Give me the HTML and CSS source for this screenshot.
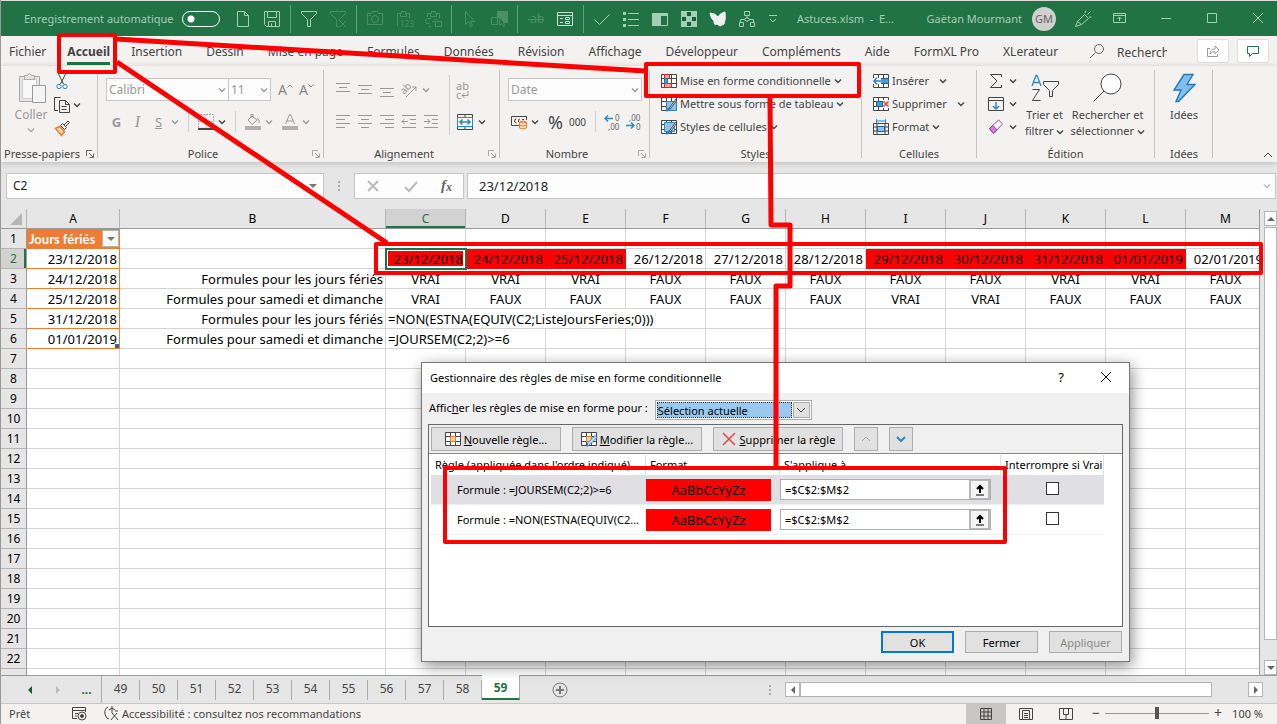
FILE: index.html
```html
<!DOCTYPE html>
<html lang="fr">
<head>
    <meta charset="UTF-8">
    <meta name="viewport" content="width=device-width, initial-scale=1.0">
    <title>Astuces.xlsm - Excel</title>
    <link rel="stylesheet" href="styles.css">
</head>
<body>
    <!-- Symboles réutilisés -->
    <svg class="symbols" aria-hidden="true">
        <symbol id="chev" viewBox="0 0 8 6"><path d="M1 1.5l3 3 3-3" fill="none" stroke="currentColor" stroke-width="1.4"/></symbol>
        <symbol id="launcher" viewBox="0 0 8 8"><path d="M.5 6V.5H6M3 3l4 4M7.5 3.5v4h-4" fill="none" stroke="currentColor"/></symbol>
        <symbol id="grid" viewBox="0 0 16 16"><path d="M.5 1.5h15v13H.5zM.5 5.500h15M.5 10.500h15M5.500 1.500v13M10.500 1.500v13" fill="#fff" stroke="#444"/></symbol>
        <symbol id="pick" viewBox="0 0 12 12"><path d="M2 11h8" stroke="#000"/><path d="M6 9V2M3 5l3-3 3 3" fill="none" stroke="#000" stroke-width="2"/></symbol>
    </svg>

    <!-- Barre de titre -->
    <header class="titlebar">
        <label class="autosave">Enregistrement automatique <input type="checkbox" class="toggle"></label>
        <div class="quick">
            <button aria-label="Nouveau"><svg viewBox="0 0 20 20"><path d="M4.500 2.500h7l4 4v11h-11zM11.500 2.500v4h4"/></svg></button>
            <button aria-label="Enregistrer"><svg viewBox="0 0 20 20"><path d="M2.500 2.500h15v15h-13l-2-2zM5.500 2.500v6h9v-6M6.500 17.500v-5h7v5M9.500 14.500v3"/></svg></button>
            <span class="sep"></span>
            <button aria-label="Filtrer"><svg viewBox="0 0 20 20"><path d="M2.500 2.500h15v2l-6 6v7h-3v-7l-6-6z"/></svg></button>
            <button class="off" aria-label="Effacer le filtre"><svg viewBox="0 0 20 20"><path d="M2.500 2.500h15v2l-6 6v2M2.500 4.500l6 6v7h2M2.500 2.500v2M12 12l6 6M18 12l-6 6"/></svg></button>
            <span class="sep"></span>
            <button class="off" aria-label="Appareil photo"><svg viewBox="0 0 20 20"><path d="M2.500 4.500h4l1-2h5l1 2h4v11h-15zM4 6.500h2"/><circle cx="10" cy="10" r="3.500"/></svg></button>
            <button class="off" aria-label="Coller les valeurs"><svg viewBox="0 0 20 20"><path d="M3.500 17v-12.500h4v-2h4v2h4v5M6.500 4.500v3h6v-3"/><text x="6" y="18">123</text></svg></button>
            <button class="off" aria-label="Coller le lien"><svg viewBox="0 0 20 20"><path d="M4.500 8v-3.500h4v-2h4v2h4v5M7.500 4.500v3h6v-3M8 9.500h-4.500q-2 3 0 5h3M9 12.500h3M11 10.500h3M12.500 12.500h6v5h-6zM8 17.500h-2"/></svg></button>
            <span class="sep"></span>
            <button class="off" aria-label="Sélectionner"><svg viewBox="0 0 20 20"><path d="M5.500 2.500v13l3-3 2 5 2-1-2-4h4z"/></svg></button>
            <button class="off" aria-label="Sélectionner des objets"><svg viewBox="0 0 20 20"><path d="M8 2h11v12h-4l-5-6-2 2z" fill="currentColor" stroke="none"/><path d="M2.500 8.500h6v7h-6zM10.500 7.500v9l2-2 2 3 1-1-1-3h3z"/></svg></button>
            <span class="sep"></span>
            <button class="off" aria-label="Barré"><svg viewBox="0 0 20 20"><text class="big" x="4" y="14">ab</text><path d="M2 10.500h16"/></svg></button>
            <button class="bright" aria-label="Formulaire"><svg viewBox="0 0 20 20"><path d="M2.500 3.500h15v13h-15zM2.500 6.500h15M5 9.500h3M5 13.500h3M10.500 8.500h4v2h-4zM10.500 12.500h4v2h-4z"/></svg></button>
            <span class="sep"></span>
            <button aria-label="Valider"><svg viewBox="0 0 20 20"><path d="M2.500 10.500l5 5 10-10"/></svg></button>
            <button aria-label="Liste"><svg viewBox="0 0 20 20"><path d="M7 4.500h11M7 10.500h11M7 16.500h11"/><path d="M2 3h3v3H2zM2 9h3v3H2zM2 15h3v3H2z" fill="currentColor" stroke="none"/></svg></button>
            <button aria-label="Volet"><svg viewBox="0 0 20 20"><path d="M2.500 4.500h15v12h-15z"/><path d="M2 4h9v13H2zM2 4h16v3H2z" fill="currentColor" stroke="none"/></svg></button>
            <button aria-label="Damier"><svg viewBox="0 0 20 20"><path d="M2 2h16v16H2z" fill="#a3cfb5" stroke="none"/><path d="M8 3h4v4H8zM3 8h4v4H3zM13 8h4v4h-4zM8 13h4v4H8z" fill="#17603a" stroke="none"/></svg></button>
            <button class="white" aria-label="Papillon"><svg viewBox="0 0 20 20"><path d="M2 4q5 0 8 4 2-4 7-5 1 7-1 12l-4 2-3-2q-3 2-3-3-3-2-4-8z" fill="currentColor"/></svg></button>
            <button aria-label="Organigramme"><svg viewBox="0 0 20 20"><path d="M7.500 2.500h5v4h-5zM10 6.500v3M10 8.500l3 2-3 2-3-2zM7 10.500h-3.500v3M13 10.500h3.500v3M2.500 13.500h4v4h-4zM13.500 13.500h4v4h-4z"/></svg></button>
            <button aria-label="Personnaliser" class="narrow"><svg viewBox="0 0 20 20"><path d="M6 6.500h8M7 10l3 3 3-3"/></svg></button>
        </div>
        <span class="doc-name">Astuces.xlsm &nbsp;-&nbsp; E...</span>
        <span class="user">Gaëtan Mourmant</span>
        <span class="avatar">GM</span>
        <div class="window-tools">
            <button aria-label="Nouveautés"><svg viewBox="0 0 20 20"><path d="M2.500 17.500l2-5 7-7 4 4-7 6zM4.500 12.500l4 3M12 4l1-2.500M14.500 5.500l3-3M16 8h2.500"/></svg></button>
            <button aria-label="Options du ruban"><svg viewBox="0 0 20 20"><path d="M4.500 4.500h12v9h-12zM4.500 6.500h12M10.500 12V8M8.500 10l2-2 2 2"/></svg></button>
        </div>
        <div class="window-buttons">
            <button aria-label="Réduire"><svg viewBox="0 0 20 20"><path d="M5 9.500h10"/></svg></button>
            <button aria-label="Agrandir"><svg viewBox="0 0 20 20"><path d="M5.500 4.500h9v9h-9z"/></svg></button>
            <button aria-label="Fermer Excel"><svg viewBox="0 0 20 20"><path d="M5 4l10 10M15 4L5 14"/></svg></button>
        </div>
    </header>

    <!-- Onglets du ruban -->
    <nav class="tabs">
        <a href="#">Fichier</a>
        <a href="#" class="active">Accueil</a>
        <a href="#">Insertion</a>
        <a href="#">Dessin</a>
        <a href="#">Mise en page</a>
        <a href="#">Formules</a>
        <a href="#">Données</a>
        <a href="#">Révision</a>
        <a href="#">Affichage</a>
        <a href="#">Développeur</a>
        <a href="#">Compléments</a>
        <a href="#">Aide</a>
        <a href="#">FormXL Pro</a>
        <a href="#">XLerateur</a>
        <div class="search">
            <svg class="i16" viewBox="0 0 16 16"><circle cx="10" cy="6" r="4.500"/><path d="M6.500 9.500L1 15"/></svg>
            <input type="text" aria-label="Rechercher" value="Rechercher">
        </div>
        <button class="tab-button" aria-label="Partager"><svg class="i16 pale" viewBox="0 0 16 16"><path d="M5 5.500H2.500v8h10V11M5 11q0-5 5-5V3l4 4-4 4V8.500q-3 0-5 2.500z"/></svg></button>
        <button class="tab-button" aria-label="Commentaires"><svg class="i16 green" viewBox="0 0 16 16"><path d="M2.500 3.500h11v7h-6l-3 3v-3h-2z"/></svg></button>
    </nav>

    <!-- Ruban -->
    <div class="ribbon">
        <section class="group clipboard">
            <div class="group-body">
                <button class="big-button pale-text">
                    <svg class="i32" viewBox="0 0 32 32"><path d="M4.500 4.500h20v25h-20z" fill="#e4e4e4" stroke="#aaa"/><path d="M7.500 7.500h14v19h-14z" fill="#f8f8f8" stroke="#ccc"/><path d="M9.500 7.500v-4h3q2-4 4 0h3v4z" fill="#e4e4e4" stroke="#aaa"/><path d="M17.500 13.500h13v17h-13z" fill="#f4f4f4" stroke="#999"/></svg>
                    Coller
                    <svg class="chev"><use href="#chev"/></svg>
                </button>
                <div class="stack">
                    <button class="row-button" aria-label="Couper"><svg class="i16" viewBox="0 0 16 16"><path d="M4.500 0l5 10M11.500 0l-5 10"/><circle cx="5" cy="12.500" r="2.200" stroke="#2b88c8"/><circle cx="11" cy="12.500" r="2.200" stroke="#2b88c8"/></svg></button>
                    <button class="row-button" aria-label="Copier"><svg class="i16" viewBox="0 0 16 16"><path d="M4 13.500H.5v-13h6M5.500 3.500h6l4 4v8h-10zM11.500 3.500v4h4M7.500 9.500h5M7.500 12.500h5"/></svg><svg class="chev"><use href="#chev"/></svg></button>
                    <button class="row-button" aria-label="Reproduire la mise en forme"><svg class="i16" viewBox="0 0 16 16"><path d="M1.500 8.500l4-2 5 5-3 4z" fill="#fbd9a8" stroke="#ed7d31" stroke-width="1.500"/><path d="M6.500 5.500l4 4 2-2-4-4zM10 5l4-4 1.500 1.500-4 4"/></svg></button>
                </div>
            </div>
            <div class="group-title">Presse-papiers<svg class="launcher"><use href="#launcher"/></svg></div>
        </section>

        <section class="group font">
            <div class="group-body column">
                <div class="line">
                    <span class="combo name"><select aria-label="Police"><option>Calibri</option></select><svg class="chev pale"><use href="#chev"/></svg></span>
                    <span class="combo size"><select aria-label="Taille"><option>11</option></select><svg class="chev pale"><use href="#chev"/></svg></span>
                    <button class="tool glyph grow">A<svg class="mini" viewBox="0 0 6 4"><path d="M.5 3.500L3 1l2.500 2.500"/></svg></button>
                    <button class="tool glyph">A<svg class="mini" viewBox="0 0 6 4"><path d="M.5.5L3 3 5.500.5"/></svg></button>
                </div>
                <div class="line">
                    <button class="tool pale-text"><b>G</b></button>
                    <button class="tool pale-text serif"><i>I</i></button>
                    <button class="tool pale-text"><u>S</u></button>
                    <svg class="chev pale"><use href="#chev"/></svg>
                    <span class="vsep"></span>
                    <button class="tool" aria-label="Bordures"><svg class="i16" viewBox="0 0 16 16"><path d="M.5 14V.5h15V14M8 .5V14M.5 7.500h15" stroke="#aaa" stroke-dasharray="2 1"/><path d="M0 15h16" stroke-width="2"/></svg></button>
                    <svg class="chev"><use href="#chev"/></svg>
                    <span class="vsep"></span>
                    <button class="tool" aria-label="Remplissage"><svg class="i16 pale" viewBox="0 0 16 16"><path d="M3 6l4-4 5 4-5 4.500zM6 4V.5h2V4M12 4q3 2 2 5"/><path d="M0 12h16v4H0z" fill="#b5aeae" stroke="none"/></svg></button>
                    <svg class="chev pale"><use href="#chev"/></svg>
                    <button class="tool font-color" aria-label="Couleur de police"><svg class="i16 pale" viewBox="0 0 16 16"><path d="M3.500 10l4-9.500h1l4 9.500M5 7h6"/><path d="M0 12h16v4H0z" fill="#b5aeae" stroke="none"/></svg></button>
                    <svg class="chev pale"><use href="#chev"/></svg>
                </div>
            </div>
            <div class="group-title">Police<svg class="launcher pale"><use href="#launcher"/></svg></div>
        </section>

        <section class="group align">
            <div class="group-body">
                <div class="stack lines">
                    <div class="line">
                        <button class="tool" aria-label="Aligner en haut"><svg class="i16 pale" viewBox="0 0 16 16"><path d="M1 1.500h14M4 5.500h8M1 9.500h14"/></svg></button>
                        <button class="tool" aria-label="Aligner au centre"><svg class="i16 pale" viewBox="0 0 16 16"><path d="M1 3.500h14M4 7.500h8M1 11.500h14"/></svg></button>
                        <button class="tool" aria-label="Aligner en bas"><svg class="i16 pale" viewBox="0 0 16 16"><path d="M1 6.500h14M4 10.500h8M1 14.500h14"/></svg></button>
                        <button class="tool" aria-label="Orientation"><svg class="i16 pale" viewBox="0 0 16 16"><text class="mid" x="0" y="10" transform="rotate(-45 5 8)">ab</text><path d="M5 15L15 5M11 5h4v4"/></svg></button>
                        <svg class="chev pale"><use href="#chev"/></svg>
                    </div>
                    <div class="line">
                        <button class="tool" aria-label="Gauche"><svg class="i16 pale" viewBox="0 0 16 16"><path d="M1 1.500h14M1 5.500h9M1 9.500h14M1 13.500h9"/></svg></button>
                        <button class="tool" aria-label="Centrer"><svg class="i16 pale" viewBox="0 0 16 16"><path d="M1 1.500h14M4 5.500h8M1 9.500h14M4 13.500h8"/></svg></button>
                        <button class="tool" aria-label="Droite"><svg class="i16 pale" viewBox="0 0 16 16"><path d="M1 1.500h14M6 5.500h9M1 9.500h14M6 13.500h9"/></svg></button>
                        <button class="tool" aria-label="Diminuer le retrait"><svg class="i16 pale" viewBox="0 0 16 16"><path d="M1 1.500h14M9 5.500h6M9 9.500h6M1 13.500h14M7 7.500H1M3.500 5L1 7.500 3.500 10"/></svg></button>
                        <button class="tool" aria-label="Augmenter le retrait"><svg class="i16 pale" viewBox="0 0 16 16"><path d="M1 1.500h14M9 5.500h6M9 9.500h6M1 13.500h14M1 7.500h6M4.500 5L7 7.500 4.500 10"/></svg></button>
                    </div>
                </div>
                <span class="vsep tall"></span>
                <div class="stack lines">
                    <div class="line">
                        <button class="tool wrap" aria-label="Renvoyer à la ligne"><span>ab</span><span>c<svg viewBox="0 0 8 8"><path d="M7 0v4.500H1M3.500 2L1 4.500 3.500 7"/></svg></span></button>
                    </div>
                    <div class="line">
                        <button class="tool" aria-label="Fusionner"><svg class="i16" viewBox="0 0 16 16"><path d="M.5.5h15v15H.5zM8 .5v3M8 12.500v3"/><path d="M.5 3.500h15v9H.5z" fill="#fff" stroke="#2b88c8"/><path d="M3 8h10M5.500 5.500L3 8l2.500 2.500M10.500 5.500L13 8l-2.500 2.500" stroke="#2b88c8" stroke-width="1.500"/></svg></button>
                        <svg class="chev"><use href="#chev"/></svg>
                    </div>
                </div>
            </div>
            <div class="group-title">Alignement<svg class="launcher pale"><use href="#launcher"/></svg></div>
        </section>

        <section class="group number">
            <div class="group-body column">
                <div class="line"><span class="combo format"><select aria-label="Format de nombre"><option>Date</option></select><svg class="chev pale"><use href="#chev"/></svg></span></div>
                <div class="line">
                    <button class="tool" aria-label="Format comptabilité"><svg class="i16" viewBox="0 0 16 16"><path d="M8 11.500H.5v-9h15V6M5.500 5q-2 0-2 2t2 2M9 5q-2 0-1.500 3M11 5.500h2"/><path d="M8.500 8q3.500-2 7 0v6q-3.500 2-7 0zM8.500 8q3.500 2 7 0M8.500 11q3.500 2 7 0" fill="#fde3c8" stroke="#ed7d31"/></svg></button>
                    <svg class="chev"><use href="#chev"/></svg>
                    <button class="tool percent">%</button>
                    <button class="tool zeros">000</button>
                    <span class="vsep"></span>
                    <button class="tool" aria-label="Ajouter une décimale"><svg class="i18" viewBox="0 0 18 18"><path d="M9 5.500H1M4 2.500l-3 3 3 3" stroke="#2b88c8" stroke-width="1.500"/><text x="11" y="8">0</text><text x="4" y="17">,00</text></svg></button>
                    <button class="tool" aria-label="Réduire les décimales"><svg class="i18" viewBox="0 0 18 18"><path d="M1 12.500h8M6 9.500l3 3-3 3" stroke="#2b88c8" stroke-width="1.500"/><text x="4" y="8">,00</text><text x="11" y="17">0</text></svg></button>
                </div>
            </div>
            <div class="group-title">Nombre<svg class="launcher pale"><use href="#launcher"/></svg></div>
        </section>

        <section class="group styles">
            <div class="group-body column tight">
                <button class="row-button"><svg class="i16" viewBox="0 0 16 16"><use href="#grid"/><path d="M3.500 1.500h5v4h-5zM3.500 10.500h7v4h-7z" fill="#f8a0a0" stroke="#d22"/><path d="M3.500 5.500h3v5h-3z" fill="#4a9ad8" stroke="#2b6fb0"/></svg>Mise en forme conditionnelle<svg class="chev"><use href="#chev"/></svg></button>
                <button class="row-button"><svg class="i16" viewBox="0 0 16 16"><use href="#grid"/><path d="M5.500 5.500h10v9h-10z" fill="#8cc4f0" stroke="#2b88c8"/><path d="M6 15l3-4 6-8 1 1-6 8z" fill="#fff" stroke="#444"/><path d="M5 15.500q1-4 3-4l2 2q-2 2-5 2z" fill="#2b88c8" stroke="none"/></svg>Mettre sous forme de tableau<svg class="chev"><use href="#chev"/></svg></button>
                <button class="row-button"><svg class="i16" viewBox="0 0 16 16"><use href="#grid"/><path d="M3.500 3.500h10v9h-10z" fill="#8cc4f0" stroke="#2b88c8"/><path d="M6 15l3-4 6-8 1 1-6 8z" fill="#fff" stroke="#444"/><path d="M5 15.500q1-4 3-4l2 2q-2 2-5 2z" fill="#2b88c8" stroke="none"/></svg>Styles de cellules<svg class="chev"><use href="#chev"/></svg></button>
            </div>
            <div class="group-title">Styles</div>
        </section>

        <section class="group cells">
            <div class="group-body column tight">
                <button class="row-button"><svg class="i16" viewBox="0 0 16 16"><use href="#grid"/><path d="M7.500 5.500h8v5h-8z" fill="#4a9ad8" stroke="#1f5f9f"/><path d="M0 5h8v6H0z" fill="#f3f2f1" stroke="none"/><path d="M8 8H1M4 4.500L1 8l3 3.500" stroke="#2b88c8" stroke-width="1.500"/></svg>Insérer<svg class="chev far"><use href="#chev"/></svg></button>
                <button class="row-button"><svg class="i16" viewBox="0 0 16 16"><use href="#grid"/><path d="M3.500 5.500h6v5h-6z" fill="#4a9ad8" stroke="#1f5f9f"/><path d="M10 4h6v8h-6z" fill="#f3f2f1" stroke="none"/><path d="M10.500 5.500l5 5M15.500 5.500l-5 5" stroke="#e04040" stroke-width="1.500"/></svg>Supprimer<svg class="chev far"><use href="#chev"/></svg></button>
                <button class="row-button"><svg class="i16" viewBox="0 0 16 16"><path d="M.5 4.500h15v11H.5zM.5 8h15M.5 12h15M4 4.500v11M12 4.500v11"/><path d="M4.500 7.500h7v5h-7z" fill="#8cc4f0" stroke="#1f5f9f"/><path d="M3.500 0v4M12.500 0v4M3.500 2h9" stroke="#2b88c8"/></svg>Format<svg class="chev"><use href="#chev"/></svg></button>
            </div>
            <div class="group-title">Cellules</div>
        </section>

        <section class="group editing">
            <div class="group-body">
                <div class="stack">
                    <button class="row-button" aria-label="Somme"><svg class="i16" viewBox="0 0 16 16"><path d="M13.500 4V1.500h-11L9 8l-6.500 6.500h11V12"/></svg><svg class="chev"><use href="#chev"/></svg></button>
                    <button class="row-button" aria-label="Recopier"><svg class="i16" viewBox="0 0 16 16"><path d="M.5 1.500h15v13H.5zM.5 4.500h15"/><path d="M8 6v7M5 10l3 3 3-3" stroke="#2b88c8" stroke-width="1.500"/></svg><svg class="chev"><use href="#chev"/></svg></button>
                    <button class="row-button" aria-label="Effacer"><svg class="i16" viewBox="0 0 16 16"><path d="M1.500 9.500L10.500 1l4 4-9 9.500z" fill="#fff" stroke="#8f3f9f"/><path d="M1.500 9.500L5 6.500l4 4.500-3.500 3.500z" fill="#d080d8" stroke="#8f3f9f"/></svg><svg class="chev"><use href="#chev"/></svg></button>
                </div>
                <button class="big-button">
                    <svg class="i32" viewBox="0 0 32 32"><path d="M3 14l4-10.500h1L12 14M4.500 10.500h6" stroke="#2b88c8" stroke-width="1.300"/><path d="M3.500 17.500h7l-7 11h8M14.500 9.500h15v3l-6 6v6h-3v-6l-6-6z"/></svg>
                    Trier et<span>filtrer <svg class="chev"><use href="#chev"/></svg></span>
                </button>
                <button class="big-button">
                    <svg class="i32" viewBox="0 0 32 32"><circle cx="19" cy="12" r="10" fill="#fcfcfc"/><path d="M12 19L1.500 29.500"/></svg>
                    Rechercher et<span>sélectionner <svg class="chev"><use href="#chev"/></svg></span>
                </button>
            </div>
            <div class="group-title">Édition</div>
        </section>

        <section class="group ideas">
            <div class="group-body">
                <button class="big-button">
                    <svg class="i32" viewBox="0 0 32 32"><path d="M16 2.500h9l-6 10h8L10.500 29.500H8l5-11.500H6z" fill="#83beec" stroke="#1f78c0" stroke-width="1.400"/></svg>
                    Idées
                </button>
            </div>
            <div class="group-title">Idées</div>
        </section>
        <button class="collapse" aria-label="Réduire le ruban"><svg viewBox="0 0 10 6"><path d="M1 5l4-4 4 4"/></svg></button>
    </div>

    <!-- Barre de formule -->
    <div class="formula-bar">
        <div class="name-box"><input type="text" aria-label="Zone Nom" value="C2"><span class="arrow-down"></span></div>
        <span class="grip"></span>
        <div class="formula-tools">
            <button aria-label="Annuler"><svg class="i16" viewBox="0 0 16 16"><path d="M3 3l10 10M13 3L3 13"/></svg></button>
            <button aria-label="Entrer"><svg class="i16" viewBox="0 0 16 16"><path d="M2 9l4 4 8-9"/></svg></button>
            <button class="fx">f<small>x</small></button>
        </div>
        <div class="formula"><input type="text" aria-label="Formule" value="23/12/2018"><svg class="chev"><use href="#chev"/></svg></div>
    </div>

    <!-- Feuille -->
    <main class="sheet">
        <div class="sheet-view">
            <table class="cells-table">
                <colgroup><col class="c-head"><col class="c-a"><col class="c-b"><col span="11" class="c-day"></colgroup>
                <thead><tr id="letters"></tr></thead>
                <tbody id="rows"></tbody>
            </table>
        </div>
        <div class="vscroll"><button aria-label="Haut"><span class="up"></span></button><div class="vthumb"></div><button aria-label="Bas"><span class="down"></span></button></div>
    </main>

    <!-- Onglets des feuilles -->
    <div class="sheet-tabs">
        <button class="nav" aria-label="Précédent"><span class="left on"></span></button>
        <button class="nav" aria-label="Suivant"><span class="right"></span></button>
        <button class="nav more">...</button>
        <div class="tab-list">
            <button>49</button><button>50</button><button>51</button><button>52</button><button>53</button><button>54</button><button>55</button><button>56</button><button>57</button><button>58</button><button class="active">59</button>
        </div>
        <button class="add" aria-label="Nouvelle feuille"><svg class="i16" viewBox="0 0 16 16"><circle cx="8" cy="8" r="7"/><path d="M4 8h8M8 4v8" stroke-width="2"/></svg></button>
        <div class="hscroll"><span class="grip"></span><button aria-label="Gauche"><span class="left"></span></button><div class="htrack"><div class="hthumb"></div></div><button aria-label="Droite"><span class="right"></span></button></div>
    </div>

    <!-- Barre d'état -->
    <footer class="status">
        <span class="ready">Prêt</span>
        <svg class="i16" viewBox="0 0 16 16"><path d="M6 13.500H1.500v-11h13V7M1.500 5.500h13M4 8.500h3M4 11h2"/><circle cx="11" cy="11" r="4"/><circle cx="11" cy="11" r="1.500" fill="#444"/></svg>
        <a href="#" class="access"><svg class="i16" viewBox="0 0 16 16"><path d="M5 2Q1 4 2 9t4 5M9 1v7M6 5l3-2 3 2M9 8l6 7M14 8l-6 7M12 6h3"/></svg>Accessibilité : consultez nos recommandations</a>
        <div class="views">
            <button class="on" aria-label="Normal"><svg class="i16" viewBox="0 0 16 16"><path d="M2.500 2.500h11v11h-11zM2.500 6h11M2.500 10h11M6 2.500v11M10 2.500v11"/></svg></button>
            <button aria-label="Mise en page"><svg class="i16" viewBox="0 0 16 16"><path d="M1.500 2.500h13v11h-13zM4.500 4.500h7v9h-7zM6 7.500h4M6 9.500h4M6 11.500h4"/></svg></button>
            <button aria-label="Sauts de page"><svg class="i16" viewBox="0 0 16 16"><path d="M1.500 2.500h13v11h-13zM5.500 2.500v6h5v-6M8 8.500v5"/></svg></button>
        </div>
        <div class="zoom"><button>−</button><input type="range" aria-label="Zoom" min="0" max="100" value="50"><button>+</button></div>
        <span class="level">100 %</span>
    </footer>

    <!-- Boîte de dialogue -->
    <div class="dialog" role="dialog" aria-labelledby="dialogTitle">
        <div class="dialog-title">
            <h1 id="dialogTitle">Gestionnaire des règles de mise en forme conditionnelle</h1>
            <button aria-label="Aide">?</button>
            <button aria-label="Fermer la fenêtre"><svg viewBox="0 0 12 12"><path d="M1 1l10 10M11 1L1 11"/></svg></button>
        </div>
        <div class="dialog-scope">
            <label for="scope">Affic<u>h</u>er les règles de mise en forme pour :</label>
            <span class="scope-box"><select id="scope"><option>Sélection actuelle</option></select><span class="drop"><svg viewBox="0 0 10 6"><path d="M1 1l4 4 4-4"/></svg></span></span>
        </div>
        <div class="rules">
            <div class="rules-bar">
                <button class="wide"><svg class="i16" viewBox="0 0 16 16"><use href="#grid"/><path d="M5.500 5.500h5v5h-5z" fill="#ffd591" stroke="#ed7d31"/></svg><span><u>N</u>ouvelle règle...</span></button>
                <button class="wide"><svg class="i16" viewBox="0 0 16 16"><use href="#grid"/><path d="M5.500 5.500h5v5h-5z" fill="#ffd591" stroke="#ed7d31"/><path d="M6 15.500l1-4 7-7 2 2-7 7z" fill="#bfe0f7" stroke="#2b88c8"/></svg><span><u>M</u>odifier la règle...</span></button>
                <button class="wide"><svg class="i16" viewBox="0 0 16 16"><path d="M2 2l12 12M14 2L2 14" stroke="#e04848" stroke-width="1.500"/></svg><span><u>S</u>upprimer la règle</span></button>
                <button class="small" aria-label="Monter" disabled><svg viewBox="0 0 10 6"><path d="M1 5l4-4 4 4"/></svg></button>
                <button class="small blue" aria-label="Descendre"><svg viewBox="0 0 10 6"><path d="M1 1l4 4 4-4"/></svg></button>
            </div>
            <div class="rules-list">
                <table>
                    <colgroup><col class="r-name"><col class="r-format"><col class="r-range"><col class="r-stop"></colgroup>
                    <thead><tr><th>Règle (appliquée dans l'ordre indiqué)</th><th>Format</th><th>S'applique à</th><th>Interrompre si Vrai</th></tr></thead>
                    <tbody>
                        <tr class="selected">
                            <td class="rule">Formule : =JOURSEM(C2;2)&gt;=6</td>
                            <td><span class="sample">AaBbCcYyZz</span></td>
                            <td><div class="range"><input type="text" aria-label="Plage 1" value="=$C$2:$M$2"><button aria-label="Choisir la plage 1"><svg><use href="#pick"/></svg></button></div></td>
                            <td class="stop"><input type="checkbox" aria-label="Interrompre 1"></td>
                        </tr>
                        <tr>
                            <td class="rule">Formule : =NON(ESTNA(EQUIV(C2...</td>
                            <td><span class="sample">AaBbCcYyZz</span></td>
                            <td><div class="range"><input type="text" aria-label="Plage 2" value="=$C$2:$M$2"><button aria-label="Choisir la plage 2"><svg><use href="#pick"/></svg></button></div></td>
                            <td class="stop"><input type="checkbox" aria-label="Interrompre 2"></td>
                        </tr>
                    </tbody>
                </table>
            </div>
        </div>
        <div class="dialog-buttons"><button class="default">OK</button><button>Fermer</button><button disabled>Appliquer</button></div>
    </div>

    <!-- Annotations rouges -->
    <svg class="notes" aria-hidden="true">
        <rect x="59" y="35" width="56" height="37"/>
        <rect x="646" y="64" width="213" height="32"/>
        <rect x="376" y="244" width="885" height="29"/>
        <rect x="445" y="468" width="560" height="74"/>
        <path d="M116 39L645 71M117 62L387 243M770 97L771 225H790V286H776V468" class="link"/>
    </svg>

<script>
    const letters = ['', 'A', 'B', 'C', 'D', 'E', 'F', 'G', 'H', 'I', 'J', 'K', 'L', 'M'];
    const dates = ['23/12/2018', '24/12/2018', '25/12/2018', '26/12/2018', '27/12/2018', '28/12/2018',
        '29/12/2018', '30/12/2018', '31/12/2018', '01/01/2019', '02/01/2019'];
    const red = [0, 1, 2, 6, 7, 8, 9];
    const holidays = ['VRAI', 'VRAI', 'VRAI', 'FAUX', 'FAUX', 'FAUX', 'FAUX', 'FAUX', 'VRAI', 'VRAI', 'FAUX'];
    const weekends = ['VRAI', 'FAUX', 'FAUX', 'FAUX', 'FAUX', 'FAUX', 'VRAI', 'VRAI', 'FAUX', 'FAUX', 'FAUX'];
    const days = 'Formules pour les jours fériés';
    const week = 'Formules pour samedi et dimanche';

    // Une cellule : [texte, classe, colonnes fusionnées]
    const data = {
        1: [['Jours fériés<button class="filter" aria-label="Filtre"><span class="arrow-down"></span></button>', 'list-head']],
        2: [['23/12/2018', 'list'], ['', ''], ...dates.map((d, i) => [d, 'date' + (red.includes(i) ? ' red' : '') + (i === 0 ? ' current' : '')])],
        3: [['24/12/2018', 'list'], [days, 'caption'], ...holidays.map(v => [v, 'center'])],
        4: [['25/12/2018', 'list'], [week, 'caption'], ...weekends.map(v => [v, 'center'])],
        5: [['31/12/2018', 'list'], [days, 'caption'], ['=NON(ESTNA(EQUIV(C2;ListeJoursFeries;0)))', '', 4]],
        6: [['01/01/2019', 'list last'], [week, 'caption'], ['=JOURSEM(C2;2)>=6', '', 2]]
    };

    document.getElementById('letters').innerHTML = letters
        .map(l => `<th class="${l === 'C' ? 'on' : ''}">${l || '<span class="corner"></span>'}</th>`).join('');

    let html = '';
    for (let r = 1; r <= 23; r++) {
        html += `<tr><th class="${r === 2 ? 'on' : ''}">${r < 23 ? r : ''}</th>`;
        let used = 0;
        for (const [text, cls, span = 1] of data[r] || []) {
            html += `<td class="${cls}" colspan="${span}">${text}</td>`;
            used += span;
        }
        html += '<td></td>'.repeat(13 - used) + '</tr>';
    }
    document.getElementById('rows').innerHTML = html;
</script>
</body>
</html>
```
FILE: styles.css
```css
* {
    box-sizing: border-box;
}
body {
    font-family: "Noto Sans", "Open Sans", sans-serif;
    font-size: 12px;
    color: #444;
    display: flex;
    flex-direction: column;
    height: 100vh;
    margin: 0;
    overflow: hidden;
    background-color: #e6e6e6;
    border-left: 1px solid #999;
}
button,
input,
select {
    font: inherit;
    color: inherit;
    margin: 0;
    padding: 0;
    border: none;
    border-radius: 0;
    background: none;
    outline: none;
}
button {
    display: flex;
    align-items: center;
    justify-content: center;
}
select {
    appearance: none;
}
svg {
    fill: none;
    stroke: #444;
    flex: none;
    overflow: visible;
}
svg text {
    font-size: 8px;
    fill: currentColor;
    stroke: none;
}
svg .mid {
    font-size: 10px;
}
svg .big {
    font-size: 12px;
}
.symbols {
    position: absolute;
    width: 0;
    height: 0;
}
.i16 {
    width: 16px;
    height: 16px;
}
.i18 {
    width: 18px;
    height: 18px;
}
.i32 {
    width: 32px;
    height: 32px;
}
.chev {
    width: 8px;
    height: 6px;
    color: #444;
}
.pale {
    color: #999;
    stroke: #999;
}
.green {
    stroke: #217346;
}
.pale-text {
    color: #999;
}

/* Barre de titre */
.titlebar {
    display: flex;
    align-items: center;
    height: 36px;
    padding: 0 9px 0 23px;
    border-top: 1px solid #ddd;
    background-color: #217346;
    color: #a3cfb5;
    font-size: 11px;
    flex: none;
    white-space: nowrap;
}
.titlebar svg {
    width: 20px;
    height: 20px;
    stroke: currentColor;
}
.autosave {
    display: flex;
    align-items: center;
    gap: 8px;
    width: 209px;
}
.toggle {
    appearance: none;
    width: 38px;
    height: 16px;
    border: 1px solid #fff;
    border-radius: 8px;
    background: radial-gradient(circle at 8px 7px, #fff 3px, transparent 4px);
}
.quick {
    display: flex;
    align-items: center;
    gap: 9px;
}
.quick .sep {
    width: 1px;
    height: 28px;
    margin: 0 -1px;
    background-color: #5f9f7b;
}
.quick .off {
    color: #4b8f69;
}
.quick .bright {
    color: #c5e2d0;
}
.quick .white {
    color: #f0f0f0;
}
.quick .narrow {
    margin-left: -3px;
}
.doc-name {
    margin-left: 14px;
}
.user {
    margin-left: auto;
}
.avatar {
    display: flex;
    align-items: center;
    justify-content: center;
    width: 24px;
    height: 24px;
    margin-left: 10px;
    border-radius: 50%;
    background-color: #d0d0d0;
    color: #666;
}
.window-tools {
    display: flex;
    gap: 16px;
    margin: 0 27px 0 17px;
}
.window-buttons {
    display: flex;
    gap: 26px;
}

/* Onglets */
.tabs {
    display: flex;
    align-items: center;
    gap: 24px;
    height: 30px;
    padding: 0 8px;
    background-color: #f3f2f1;
    flex: none;
}
.tabs a {
    padding-top: 4px;
    color: #444;
    text-decoration: none;
    white-space: nowrap;
    line-height: 20px;
    border-bottom: 3px solid transparent;
}
.tabs .active {
    margin: 0 -3px;
    font-weight: bold;
    border-color: #217346;
}
.search {
    display: flex;
    align-items: center;
    gap: 12px;
    flex: 1;
    min-width: 0;
    padding-left: 7px;
}
.search svg {
    stroke: #666;
}
.search input {
    width: 50px;
    margin-top: 2px;
}
.tab-button {
    width: 32px;
    height: 24px;
    border: 1px solid #ddd;
    border-radius: 2px;
    background-color: #fff;
}
.tab-button + .tab-button {
    margin-left: -16px;
}

/* Ruban */
.ribbon {
    display: flex;
    height: 96px;
    background-color: #f3f2f1;
    box-shadow: 0 1px 6px rgba(0, 0, 0, 0.2);
    font-size: 11px;
    flex: none;
}
.group {
    display: flex;
    flex-direction: column;
    position: relative;
    padding: 3px 0 0 8px;
    flex: none;
}
.group::after {
    content: "";
    position: absolute;
    top: 4px;
    right: 0;
    bottom: 4px;
    width: 1px;
    background-color: #c6c4c2;
}
.group-body {
    display: flex;
    flex: 1;
}
.group-body.column {
    flex-direction: column;
    gap: 9px;
    padding-top: 9px;
}
.group-body.tight {
    gap: 0;
    padding-top: 0;
}
.group-title {
    display: flex;
    justify-content: center;
    align-items: center;
    height: 16px;
    margin-bottom: 1px;
    padding-right: 12px;
}
.launcher {
    position: absolute;
    right: 4px;
    bottom: 4px;
    width: 8px;
    height: 8px;
    color: #666;
}
.launcher.pale {
    color: #aaa;
}
.clipboard { width: 97px; }
.font { width: 226px; }
.align { width: 176px; }
.number { width: 150px; }
.styles { width: 212px; }
.cells { width: 115px; }
.editing { width: 178px; }
.ideas { width: 58px; }
.clipboard .group-title {
    justify-content: flex-start;
    margin-left: -5px;
}
.font .group-title,
.align .group-title,
.number .group-title {
    margin-left: -8px;
    padding-right: 16px;
}
.ideas .group-title {
    padding-right: 8px;
}
.line {
    display: flex;
    align-items: center;
    height: 23px;
}
.stack {
    display: flex;
    flex-direction: column;
}
.lines {
    gap: 9px;
    padding-top: 9px;
}
.tool {
    width: 21px;
    height: 21px;
    font-size: 13px;
}
.align .tool {
    width: 22px;
}
.line > .chev {
    margin: 0 3px 0 2px;
}
.serif {
    font-family: "Liberation Serif", serif;
    font-size: 16px;
}
.glyph {
    color: #888;
    font-size: 14px;
}
.grow {
    margin-left: 4px;
}
.font-color {
    margin-left: 3px;
}
.mini {
    width: 6px;
    height: 4px;
    stroke: #888;
    margin-bottom: 8px;
}
.align .wrap {
    flex-direction: column;
    align-items: flex-start;
    padding-left: 2px;
    font-size: 11px;
    line-height: 9px;
    color: #999;
}
.wrap svg {
    width: 8px;
    height: 8px;
    stroke: #999;
}
.percent {
    font-size: 18px;
    margin-left: 3px;
}
.zeros {
    font-size: 10px;
    width: 23px;
}
.number .i18 {
    color: #666;
}
.vsep {
    width: 1px;
    height: 21px;
    margin: 0 6px;
    background-color: #d0d0d0;
}
.vsep.tall {
    height: 60px;
    margin: 6px 4px 0 7px;
}
.combo {
    display: flex;
    align-items: center;
    width: 123px;
    height: 23px;
    padding: 0 2px;
    border: 1px solid #c6c6c6;
    background-color: #fcfcfc;
    color: #999;
    font-size: 12px;
}
.combo select {
    flex: 1;
    min-width: 0;
}
.combo.size {
    width: 43px;
    margin-left: -1px;
}
.combo.format {
    width: 134px;
}
.row-button {
    justify-content: flex-start;
    gap: 3px;
    height: 23px;
    white-space: nowrap;
}
.row-button .far {
    margin-left: 7px;
}
.big-button {
    flex-direction: column;
    justify-content: flex-start;
    padding-top: 3px;
    line-height: 16px;
    white-space: nowrap;
}
.big-button .i32 {
    margin-bottom: 3px;
}
.styles,
.cells,
.editing {
    padding-left: 11px;
}
.clipboard .big-button {
    width: 44px;
    font-size: 12px;
}
.clipboard .big-button .chev {
    margin-top: 4px;
    color: #aaa;
}
.clipboard .stack {
    margin-left: 1px;
    padding-top: 1px;
}
.editing .row-button {
    gap: 5px;
}
.editing .big-button {
    margin-left: 8px;
}
.editing .big-button + .big-button {
    margin-left: 6px;
}
.ideas .big-button {
    width: 42px;
}
.collapse {
    margin: auto 4px 4px auto;
}
.collapse svg {
    width: 10px;
    height: 6px;
}

/* Barre de formule */
.formula-bar {
    display: flex;
    align-items: center;
    height: 47px;
    padding: 0 1px 0 5px;
    flex: none;
    font-size: 13px;
    color: #222;
}
.name-box,
.formula-tools,
.formula {
    display: flex;
    align-items: center;
    height: 26px;
    border: 1px solid #c6c6c6;
    background-color: #fdfdfd;
}
.name-box {
    width: 318px;
    padding: 0 6px;
    font-size: 12px;
}
.name-box input,
.formula input {
    flex: 1;
    min-width: 0;
}
.arrow-down {
    border: 4px solid transparent;
    border-top-color: #777;
    border-bottom: none;
}
.grip {
    width: 2px;
    height: 10px;
    margin: 0 14px;
    background: repeating-linear-gradient(#aaa 0 2px, transparent 2px 4px);
}
.formula-tools {
    width: 110px;
    padding: 0 10px;
    justify-content: space-between;
}
.formula-tools svg {
    stroke: #bbb;
    stroke-width: 2;
}
.fx {
    padding-right: 1px;
    font-family: "Liberation Serif", serif;
    font-size: 15px;
    font-style: italic;
    font-weight: bold;
    color: #666;
}
.fx small {
    font-size: 12px;
    margin-top: 4px;
}
.formula {
    flex: 1;
    margin-left: 3px;
    padding: 0 4px 0 11px;
}
.formula .chev {
    color: #bbb;
}

/* Feuille */
.sheet {
    display: flex;
    flex: 1;
    min-height: 0;
    color: #000;
}
.sheet-view {
    flex: 1;
    min-width: 0;
    margin-right: 4px;
    overflow: hidden;
    border-right: 1px solid #999;
}
.cells-table {
    width: 1265px;
    table-layout: fixed;
    border-collapse: separate;
    border-spacing: 0;
    font-size: 13px;
}
.c-head { width: 26px; }
.c-a { width: 93px; }
.c-b { width: 266px; }
.c-day { width: 80px; }
.cells-table th {
    height: 20px;
    padding: 0;
    font-size: 12px;
    font-weight: normal;
    line-height: 18px;
    background-color: #e6e6e6;
    border-right: 1px solid #b5b5b5;
    border-bottom: 1px solid #b5b5b5;
}
.cells-table thead th {
    border-bottom-color: #999;
}
.cells-table tbody th {
    border-right-color: #999;
}
.cells-table .on {
    background-color: #d2d2d2;
    color: #217346;
}
.cells-table thead .on {
    box-shadow: inset 0 -2px #217346;
}
.cells-table tbody .on {
    box-shadow: inset -2px 0 #217346;
}
.corner {
    display: block;
    width: 0;
    margin-left: 9px;
    border-left: 12px solid transparent;
    border-bottom: 12px solid #b5b5b5;
}
.cells-table td {
    height: 20px;
    padding: 0 2px;
    line-height: 18px;
    white-space: nowrap;
    background-color: #fff;
    border-right: 1px solid #d4d4d4;
    border-bottom: 1px solid #d4d4d4;
}
.cells-table .list,
.cells-table .date,
.cells-table .caption {
    text-align: right;
}
.cells-table .center {
    text-align: center;
}
.cells-table .list {
    border-color: #ed7d31;
}
.cells-table .last {
    background: linear-gradient(#3f5fb0, #3f5fb0) right bottom / 4px 4px no-repeat #fff;
}
.cells-table .list-head {
    position: relative;
    background-color: #ed7d31;
    border-color: #ed7d31;
    color: #fff;
    font-family: Lato, "Noto Sans", sans-serif;
    font-weight: bold;
}
.filter {
    position: absolute;
    right: 0;
    top: 1px;
    width: 17px;
    height: 17px;
    border: 1px solid #b5b5b5;
    background-color: #f8f8f8;
}
.cells-table .red {
    background-color: #f00;
    border-color: #f00;
}
.cells-table .current {
    outline: 2px solid #217346;
    outline-offset: -1px;
    box-shadow: inset 0 0 0 2px #fff;
}
.vscroll {
    display: flex;
    flex-direction: column;
    width: 13px;
    padding-top: 2px;
}
.vscroll button {
    height: 15px;
    border: 1px solid #b5b5b5;
    background-color: #fdfdfd;
}
.vthumb {
    flex: 1;
    margin: 1px 0 20px;
    border: 1px solid #b5b5b5;
    background-color: #fff;
}
.up,
.down {
    border: 4px solid transparent;
}
.up {
    border-top: none;
    border-bottom-color: #666;
}
.down {
    border-bottom: none;
    border-top-color: #666;
}
.left,
.right {
    border: 4px solid transparent;
}
.left {
    border-left: none;
    border-right-color: #666;
}
.right {
    border-right: none;
    border-left-color: #666;
}

/* Onglets des feuilles */
.sheet-tabs {
    display: flex;
    align-items: center;
    height: 28px;
    padding: 0 14px 0 15px;
    border-top: 1px solid #999;
    flex: none;
}
.nav {
    width: 28px;
}
.nav .right {
    border-left-color: #bbb;
}
.nav .on {
    border-right-color: #0e5c2f;
}
.nav.more {
    width: 29px;
    color: #217346;
    font-weight: bold;
}
.tab-list {
    display: flex;
    align-self: stretch;
    align-items: center;
    border-left: 1px solid #aaa;
}
.tab-list button {
    width: 38px;
    height: 20px;
    padding-bottom: 2px;
    border-right: 1px solid #aaa;
}
.tab-list .active {
    align-self: flex-start;
    height: 25px;
    padding-top: 2px;
    padding-bottom: 0;
    margin-top: -1px;
    background-color: #fff;
    border-bottom: 2px solid #217346;
    color: #217346;
    font-weight: bold;
}
.add {
    margin-left: 32px;
}
.add svg {
    stroke: #777;
}
.hscroll {
    display: flex;
    align-items: center;
    width: 508px;
    margin-left: auto;
}
.hscroll button {
    width: 15px;
    height: 15px;
    border: 1px solid #b5b5b5;
    background-color: #fdfdfd;
}
.htrack {
    flex: 1;
}
.hthumb {
    width: 92%;
    height: 15px;
    border: 1px solid #b5b5b5;
    background-color: #fff;
}

/* Barre d'état */
.status {
    display: flex;
    align-items: center;
    height: 21px;
    padding: 0 14px 2px 8px;
    border-top: 1px solid #c6c6c6;
    background-color: #f3f2f1;
    font-size: 11px;
    flex: none;
}
.ready {
    width: 62px;
}
.access {
    display: flex;
    align-items: center;
    gap: 3px;
    margin-left: 16px;
    color: #444;
    text-decoration: none;
}
.views {
    display: flex;
    margin-left: auto;
}
.views button {
    width: 40px;
    height: 20px;
    margin-bottom: -2px;
}
.views .on {
    background-color: #c8c6c4;
}
.zoom {
    display: flex;
    align-items: center;
    gap: 3px;
    margin-left: 4px;
}
.zoom button {
    width: 12px;
    font-size: 14px;
    line-height: 16px;
}
.zoom input {
    appearance: none;
    width: 104px;
    height: 12px;
    background: linear-gradient(#999, #999) center / 100% 1px no-repeat;
}
.zoom input::-webkit-slider-thumb {
    appearance: none;
    width: 4px;
    height: 12px;
    background-color: #555;
}
.level {
    margin-left: 8px;
}

/* Boîte de dialogue */
.dialog {
    position: absolute;
    left: 421px;
    top: 362px;
    width: 709px;
    border: 1px solid #777;
    background-color: #f0f0f0;
    box-shadow: 2px 4px 14px rgba(0, 0, 0, 0.45);
    color: #000;
    font-size: 11px;
}
.dialog-title {
    display: flex;
    align-items: center;
    height: 30px;
    padding: 0 16px 2px 8px;
    background-color: #fff;
}
.dialog-title h1 {
    flex: 1;
    margin: 0;
    font-size: 11px;
    font-weight: normal;
}
.dialog-title button {
    width: 14px;
    margin-left: 31px;
    font-size: 13px;
}
.dialog-title svg {
    width: 12px;
    height: 12px;
    stroke: #000;
}
.dialog-scope {
    display: flex;
    align-items: center;
    height: 31px;
    padding: 0 0 2px 7px;
}
.scope-box {
    display: flex;
    align-items: center;
    margin: 5px 0 0 7px;
    width: 157px;
    height: 20px;
    padding: 1px;
    border: 1px solid #adadad;
    background-color: #fff;
}
.scope-box select {
    flex: 1;
    height: 16px;
    border: 1px dotted #333;
    background-color: #99c9ef;
}
.drop {
    display: flex;
    align-items: center;
    justify-content: center;
    width: 17px;
    height: 16px;
    margin-left: 1px;
    border: 1px solid #adadad;
    background-color: #e1e1e1;
}
.drop svg {
    width: 10px;
    height: 6px;
}
.rules {
    margin: 0 6px;
    border: 1px solid #666;
}
.rules-bar {
    display: flex;
    gap: 11px;
    padding: 2px;
}
.rules-bar button,
.dialog-buttons button {
    height: 24px;
    border: 1px solid #adadad;
    background-color: #e1e1e1;
}
.rules-bar .wide {
    width: 130px;
    gap: 3px;
}
.rules-bar .small {
    width: 24px;
}
.rules-bar .small svg {
    width: 10px;
    height: 6px;
    stroke: #aaa;
}
.rules-bar .blue svg {
    stroke: #2b88c8;
    stroke-width: 2;
}
.rules-list {
    height: 173px;
    padding: 1px 0 0 2px;
    border-top: 1px solid #888;
    background-color: #fff;
}
.rules-list table {
    width: 673px;
    table-layout: fixed;
    border-collapse: separate;
    border-spacing: 0;
}
.r-name { width: 215px; }
.r-format { width: 134px; }
.r-range { width: 221px; }
.r-stop { width: 103px; }
.rules-list th {
    height: 20px;
    padding: 0 4px 2px;
    text-align: left;
    font-weight: normal;
    white-space: nowrap;
    border-right: 1px solid #e0e0e0;
}
.rules-list td {
    height: 30px;
    padding: 0;
    border-bottom: 1px solid #eee;
    white-space: nowrap;
}
.selected td {
    background-color: #e0dfe4;
}
.rules-list .rule {
    padding-left: 26px;
}
.sample {
    display: block;
    width: 125px;
    line-height: 22px;
    background-color: #f00;
    text-align: center;
    font-size: 13px;
}
.range {
    display: flex;
    width: 211px;
    height: 21px;
    border: 1px solid #adadad;
    background-color: #fff;
}
.range input {
    flex: 1;
    min-width: 0;
    padding-left: 4px;
}
.range button {
    width: 21px;
    border: 2px solid #b8b8b8;
    border-width: 1px 2px;
    background-color: #f4f4f4;
}
.range svg {
    width: 12px;
    height: 12px;
}
.rules-list .stop {
    text-align: center;
}
.stop input {
    appearance: none;
    width: 13px;
    height: 13px;
    border: 1px solid #333;
    background-color: #fff;
}
.dialog-buttons {
    display: flex;
    justify-content: flex-end;
    gap: 11px;
    padding: 4px 7px 8px;
}
.dialog-buttons button {
    width: 73px;
    height: 22px;
}
.dialog-buttons .default {
    border: 2px solid #0078d7;
}
.dialog-buttons button:disabled {
    color: #8a8a8a;
}

/* Annotations */
.notes {
    position: absolute;
    left: 0;
    top: 0;
    width: 100%;
    height: 100%;
    pointer-events: none;
    stroke: #f00;
    stroke-width: 4;
    stroke-linejoin: round;
}
.notes .link {
    stroke-width: 5;
}
```
